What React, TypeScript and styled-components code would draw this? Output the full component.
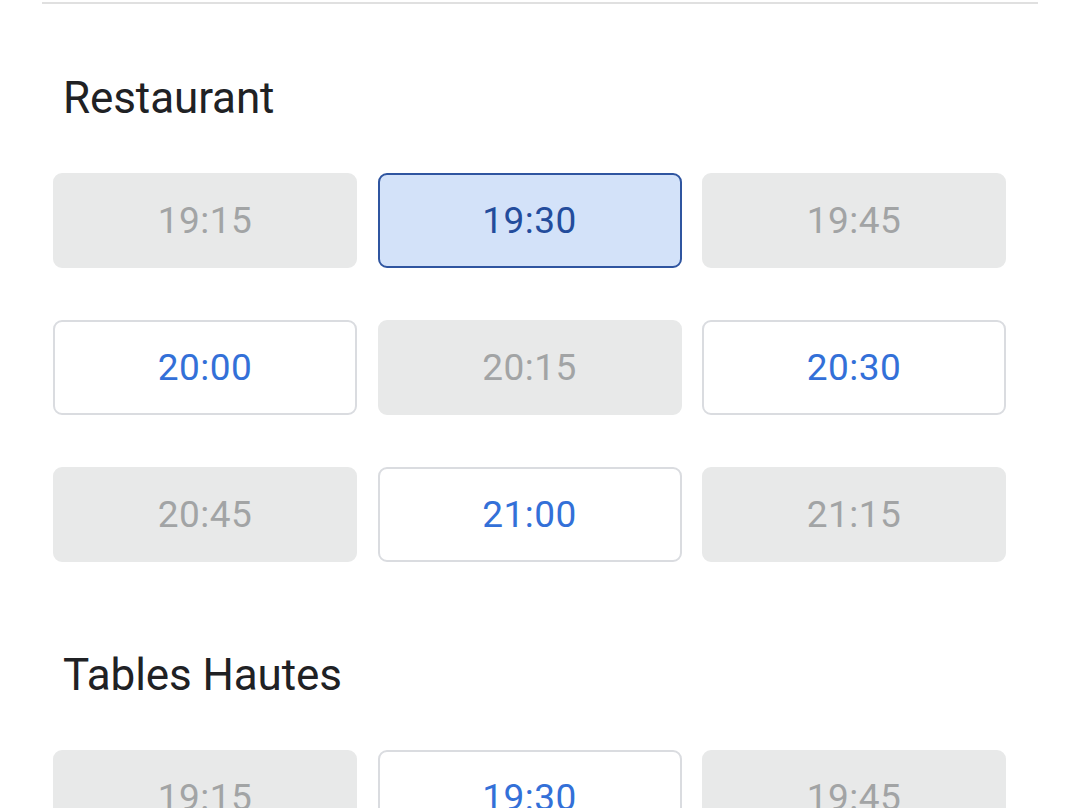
import React from "react";
import styled, { createGlobalStyle } from "styled-components";

const GlobalStyle = createGlobalStyle`
  html, body {
    margin: 0;
    padding: 0;
    background: #ffffff;
  }
  body {
    font-family: Roboto, "Noto Sans", "Liberation Sans", sans-serif;
    overflow: hidden;
  }
`;

type SlotState = "full" | "open" | "selected";

type Slot = { time: string; state: SlotState };

const restaurant: Slot[] = [
  { time: "19:15", state: "full" },
  { time: "19:30", state: "selected" },
  { time: "19:45", state: "full" },
  { time: "20:00", state: "open" },
  { time: "20:15", state: "full" },
  { time: "20:30", state: "open" },
  { time: "20:45", state: "full" },
  { time: "21:00", state: "open" },
  { time: "21:15", state: "full" },
];

const tablesHautes: Slot[] = [
  { time: "19:15", state: "full" },
  { time: "19:30", state: "open" },
  { time: "19:45", state: "full" },
];

const Page = styled.div`
  width: 1080px;
  height: 808px;
  overflow: hidden;
`;

const Divider = styled.div`
  margin: 2px 42px 0;
  height: 2px;
  background: #e0e0e0;
`;

const Section = styled.section`
  padding: 68px 0 0 53px;

  & + & {
    padding-top: 87px;
  }
`;

const Title = styled.h2`
  margin: 0 0 49px 10px;
  font-size: 44px;
  line-height: 52px;
  font-weight: 400;
  color: #202124;
  letter-spacing: -0.1px;
`;

const SlotGrid = styled.div`
  display: grid;
  grid-template-columns: repeat(3, 304px);
  column-gap: 20.5px;
  row-gap: 52px;
`;

const palette: Record<SlotState, { bg: string; border: string; color: string }> = {
  full: { bg: "#e8e9e9", border: "#e8e9e9", color: "#a2a4a5" },
  open: { bg: "#ffffff", border: "#dadce0", color: "#3370d8" },
  selected: { bg: "#d3e2f9", border: "#2f55a0", color: "#234c9c" },
};

const SlotButton = styled.button<{ $state: SlotState }>`
  height: 95px;
  box-sizing: border-box;
  border-radius: 9px;
  border: 2px solid ${(p) => palette[p.$state].border};
  background: ${(p) => palette[p.$state].bg};
  color: ${(p) => palette[p.$state].color};
  font-family: Roboto, "Noto Sans", sans-serif;
  font-size: 37px;
  font-weight: 400;
  letter-spacing: 0.5px;
  display: flex;
  align-items: center;
  justify-content: center;
  padding: 0;
  cursor: ${(p) => (p.$state === "full" ? "default" : "pointer")};
`;

function SlotSection({ title, slots }: { title: string; slots: Slot[] }) {
  return (
    <Section>
      <Title>{title}</Title>
      <SlotGrid>
        {slots.map((s) => (
          <SlotButton key={s.time} $state={s.state} disabled={s.state === "full"}>
            {s.time}
          </SlotButton>
        ))}
      </SlotGrid>
    </Section>
  );
}

export default function App() {
  return (
    <Page>
      <GlobalStyle />
      <Divider />
      <SlotSection title="Restaurant" slots={restaurant} />
      <SlotSection title="Tables Hautes" slots={tablesHautes} />
    </Page>
  );
}
